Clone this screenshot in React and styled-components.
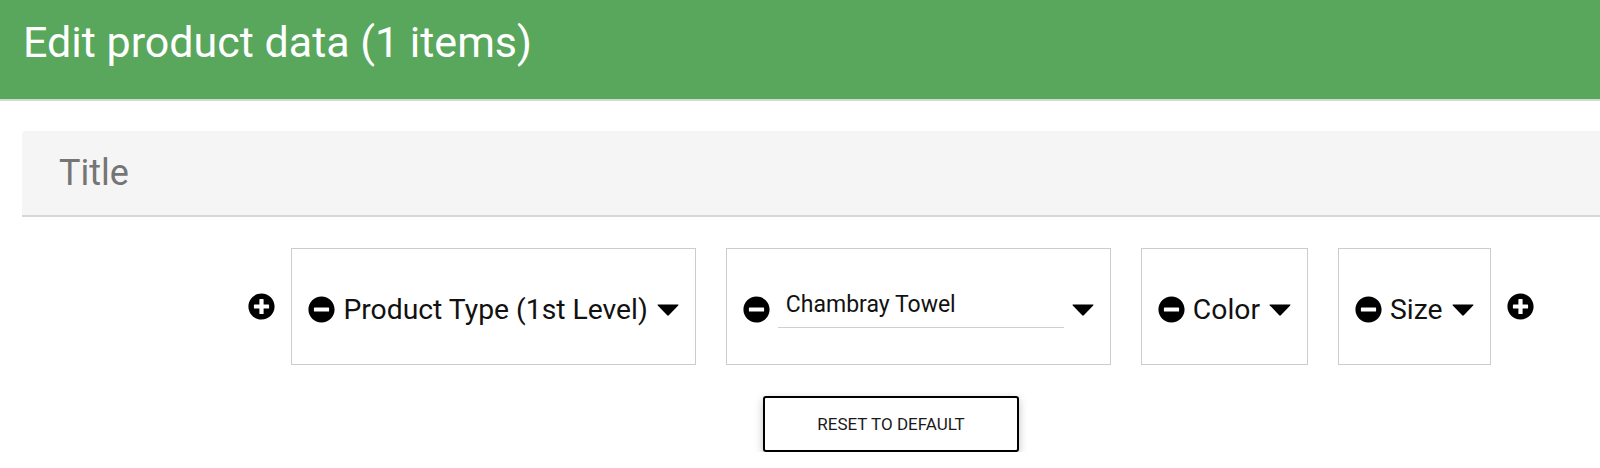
import React from "react";
import styled, { createGlobalStyle } from "styled-components";
import { FaPlusCircle, FaMinusCircle } from "react-icons/fa";

const GlobalStyle = createGlobalStyle`
  html, body {
    margin: 0;
    padding: 0;
    overflow: hidden;
    background: #ffffff;
    font-family: Roboto, "Liberation Sans", Arial, sans-serif;
  }
`;

const Header = styled.header`
  height: 101px;
  box-sizing: border-box;
  padding: 18px 0 0 23px;
  background: #58a75c;
  border-bottom: 2px solid #cfdccf;
  color: #ffffff;
  font-size: 43px;
  line-height: 48px;
`;

const Content = styled.main`
  width: 1738px;
  margin-left: 22px;
  padding-top: 30px;
  display: flex;
  flex-direction: column;
  align-items: center;
`;

const TitleBar = styled.div`
  align-self: stretch;
  background: #f5f5f5;
  border-bottom: 2px solid #d7d7d7;
  border-top-left-radius: 4px;
  padding: 21px 37px;
  color: #757575;
  font-size: 36px;
  line-height: 42px;
`;

const Row = styled.div`
  margin-top: 31px;
  display: flex;
  align-items: center;
  gap: 16px;
`;

const Chips = styled.div`
  display: flex;
  gap: 30px;
`;

const Chip = styled.div`
  height: 117px;
  box-sizing: border-box;
  border: 1px solid #cccccc;
  padding: 6px 16px 0;
  display: flex;
  align-items: center;
  gap: 8px;
  color: #111111;
  font-size: 28.3px;
`;

const Label = styled.span`
  margin-right: 1px;
`;

const IconButton = styled.span`
  display: inline-flex;
  width: 27px;
  height: 27px;
  color: #000000;
  svg {
    width: 27px;
    height: 27px;
  }
`;

const InputWrap = styled.div`
  width: 286px;
  height: 40px;
  box-sizing: border-box;
  border-bottom: 1px solid #cfcfcf;
  padding: 0 8px;
  margin-bottom: 4px;
  font-size: 23px;
  line-height: 34px;
  color: #111111;
`;

const Caret = styled.svg`
  width: 22px;
  height: 12px;
  flex: none;
`;

const ResetButton = styled.button`
  margin-top: 31px;
  width: 256px;
  height: 56px;
  border: 2px solid #000000;
  border-radius: 3px;
  background: #ffffff;
  box-shadow: 0 3px 8px rgba(0, 0, 0, 0.25);
  font-family: Roboto, "Liberation Sans", Arial, sans-serif;
  font-size: 17px;
  color: #1a1a1a;
  text-transform: uppercase;
  cursor: pointer;
`;

const Arrow = () => (
  <Caret viewBox="0 0 22 12">
    <path d="M1 0.5 H21 Q22 0.5 21.2 1.4 L11.8 11.3 Q11 12 10.2 11.3 L0.8 1.4 Q0 0.5 1 0.5 Z" fill="#000" />
  </Caret>
);

const Add = () => (
  <IconButton>
    <FaPlusCircle />
  </IconButton>
);

const Remove = () => (
  <IconButton>
    <FaMinusCircle />
  </IconButton>
);

const chips = [
  { label: "Product Type (1st Level)" },
  { value: "Chambray Towel" },
  { label: "Color" },
  { label: "Size" },
];

export default function App() {
  return (
    <>
      <GlobalStyle />
      <Header>Edit product data (1 items)</Header>
      <Content>
        <TitleBar>Title</TitleBar>
        <Row>
          <Add />
          <Chips>
            {chips.map((c, i) => (
              <Chip key={i}>
                <Remove />
                {c.value ? <InputWrap>{c.value}</InputWrap> : <Label>{c.label}</Label>}
                <Arrow />
              </Chip>
            ))}
          </Chips>
          <Add />
        </Row>
        <ResetButton>Reset to default</ResetButton>
      </Content>
    </>
  );
}
